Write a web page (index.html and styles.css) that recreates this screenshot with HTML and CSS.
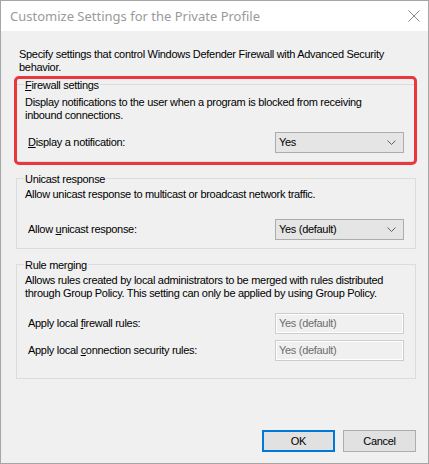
FILE: index.html
```html
<!DOCTYPE html>
<html>
<head>
<meta charset="utf-8">
<link rel="stylesheet" href="styles.css">
</head>
<body>
<div class="window">
  <div class="titlebar">
    <span class="title">Customize Settings for the Private Profile</span>
    <svg class="close" width="12" height="12" viewBox="0 0 12 12"><path d="M0.5 0.5 L11.5 11.5 M11.5 0.5 L0.5 11.5" stroke="#8c8c8c" stroke-width="1" fill="none"/></svg>
  </div>
  <div class="content">
    <p class="intro">Specify settings that control Windows Defender Firewall with Advanced Security<br>behavior.</p>

    <div class="marked">
      <fieldset class="group group-fw">
        <legend><u>F</u>irewall settings</legend>
        <p class="desc">Display notifications to the user when a program is blocked from receiving<br>inbound connections.</p>
        <div class="row">
          <span><u>D</u>isplay a notification:</span>
          <div class="combo"><span>Yes</span><svg width="9" height="5" viewBox="0 0 9 5"><path d="M0.5 0.5 L4.5 4.5 L8.5 0.5" stroke="#606060" fill="none"/></svg></div>
        </div>
      </fieldset>
      <div class="highlight"></div>
    </div>

    <fieldset class="group group-uc">
      <legend>Unicast response</legend>
      <p class="desc">Allow unicast response to multicast or broadcast network traffic.</p>
      <div class="row">
        <span>Allow <u>u</u>nicast response:</span>
        <div class="combo"><span>Yes (default)</span><svg width="9" height="5" viewBox="0 0 9 5"><path d="M0.5 0.5 L4.5 4.5 L8.5 0.5" stroke="#606060" fill="none"/></svg></div>
      </div>
    </fieldset>

    <fieldset class="group group-rm">
      <legend>Rule merging</legend>
      <p class="desc">Allows rules created by local administrators to be merged with rules distributed<br>through Group Policy. This setting can only be applied by using Group Policy.</p>
      <div class="row row-first">
        <span>Apply local <u>f</u>irewall rules:</span>
        <div class="textbox">Yes (default)</div>
      </div>
      <div class="row row-second">
        <span>Apply local <u>c</u>onnection security rules:</span>
        <div class="textbox">Yes (default)</div>
      </div>
    </fieldset>

    <div class="buttons">
      <div class="btn btn-default">OK</div>
      <div class="btn">Cancel</div>
    </div>
  </div>
</div>
</body>
</html>
```
FILE: styles.css
```css
* { box-sizing: border-box; }
html, body { margin: 0; padding: 0; }
body {
  font-family: "Liberation Sans", Arial, sans-serif;
  font-size: 11px;
  line-height: 13px;
  letter-spacing: -0.3px;
  color: #000;
  background: #f0f0f0;
}
.window {
  width: 429px;
  height: 464px;
  border: 1px solid #a6a6a6;
  display: flex;
  flex-direction: column;
  background: #f0f0f0;
}
.titlebar {
  height: 30px;
  flex: none;
  background: #fff;
  display: flex;
  align-items: center;
  justify-content: space-between;
  padding: 0 8px 0 9px;
}
.title {
  font-family: "Noto Sans", "Open Sans", sans-serif;
  font-size: 13px;
  letter-spacing: 0;
  color: #9a9a9a;
  line-height: 20px;
}
.close { display: block; }
.content {
  flex: 1;
  display: flex;
  flex-direction: column;
  padding: 17px 12px 11px 15px;
}
.intro { margin: 0 0 2px 3px; white-space: nowrap; }
.marked { position: relative; }
.highlight {
  position: absolute;
  top: 0;
  left: -2px;
  right: -1px;
  bottom: -3px;
  border: 3px solid #e8383d;
  border-radius: 5px;
  pointer-events: none;
}
.group {
  margin: 0;
  min-width: 0;
  border: 1px solid #dcdcdc;
  padding: 0 11px 8px 8px;
}
.group legend {
  padding: 3px 1px 0 1px;
  margin-left: -1px;
  line-height: 13px;
}
.desc { margin: 2px 0 0 0; white-space: nowrap; }
.row {
  display: flex;
  justify-content: space-between;
  align-items: center;
  margin-left: 3px;
}
.group-fw .desc { margin-top: 4px; }
.group-fw .row { margin-top: 10px; }
.group-uc { margin-top: 8px; }
.group-uc .row { margin-top: 18px; }
.group-rm { margin-top: 7px; padding-bottom: 17px; }
.group-rm .row-first { margin-top: 13px; }
.group-rm .row-second { margin-top: 6px; }
.combo {
  width: 129px;
  height: 21px;
  border: 1px solid #acacac;
  background: #e5e5e5;
  display: flex;
  align-items: center;
  justify-content: space-between;
  padding: 0 7px 0 3px;
}
.combo svg { display: block; }
.textbox {
  width: 129px;
  height: 21px;
  border: 1px solid #cccccc;
  background: #f0f0f0;
  box-shadow: inset -1px -1px 0 #fff, inset 1px 1px 0 #fff;
  color: #6d6d6d;
  display: flex;
  align-items: center;
  padding: 0 3px;
}
.buttons {
  margin-top: auto;
  display: flex;
  justify-content: flex-end;
  gap: 8px;
}
.btn {
  width: 73px;
  height: 22px;
  border: 1px solid #adadad;
  background: #e1e1e1;
  display: flex;
  align-items: center;
  justify-content: center;
}
.btn-default { border: 2px solid #0078d7; }
```
